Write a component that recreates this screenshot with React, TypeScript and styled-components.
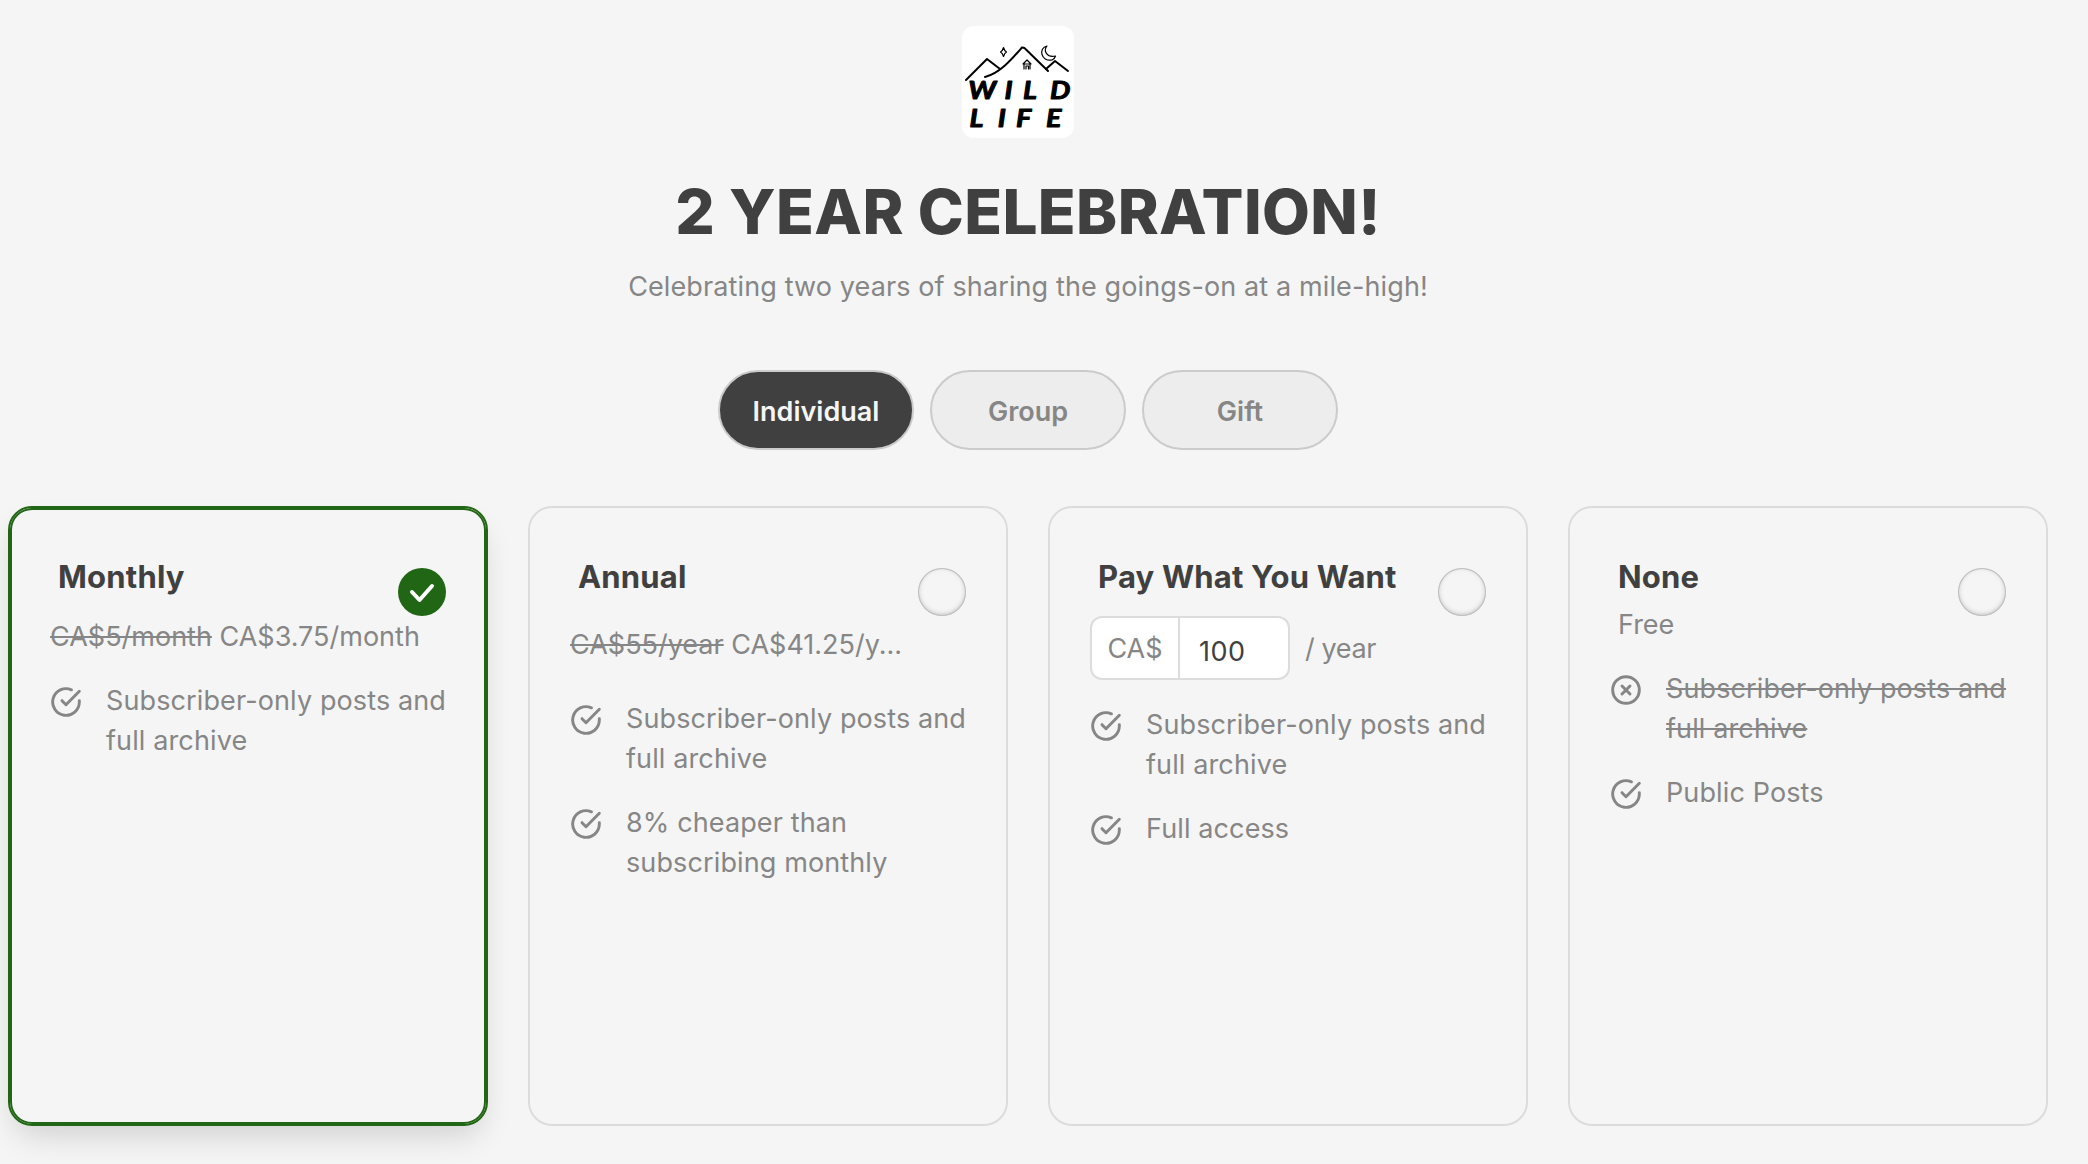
import * as React from 'react'
import styled, { createGlobalStyle, css } from 'styled-components'

const colorText = '#404040'
const colorMuted = '#868686'
const colorBorder = '#dcdcdc'
const colorAccent = '#216614'

const GlobalStyle = createGlobalStyle`
    * {
        box-sizing: border-box;
    }

    body {
        margin: 0;
        background: #f5f5f5;
        font-family: 'Inter', 'Liberation Sans', sans-serif;
        color: ${colorMuted};
        overflow: hidden;
    }
`

const Page = styled.main`
    display: flex;
    flex-direction: column;
    align-items: center;
    width: 2088px;
    height: 1164px;
    padding: 26px 40px 0 8px;
    overflow: hidden;
`

const LogoBox = styled.div`
    width: 112px;
    height: 112px;
    margin-right: 20px;
    border-radius: 12px;
    background: #fff;
    overflow: hidden;
`

const Heading = styled.h1`
    margin: 34px 0 0;
    font-size: 62px;
    font-weight: 800;
    line-height: 80px;
    letter-spacing: 0.38px;
    white-space: nowrap;
    color: ${colorText};
`

const Subheading = styled.p`
    margin: 15px 0 0;
    font-size: 27px;
    line-height: 40px;
    letter-spacing: 0.12px;
    white-space: nowrap;
`

const TabBar = styled.div`
    display: flex;
    gap: 16px;
    margin-top: 63px;
`

const Tab = styled.button<{ $active?: boolean }>`
    width: 196px;
    height: 80px;
    padding: 2px 0 0;
    border: 2px solid #cbcbcb;
    border-radius: 40px;
    background: ${(props) => (props.$active ? '#404040' : '#ededed')};
    color: ${(props) => (props.$active ? '#f5f5f5' : colorMuted)};
    font-family: inherit;
    font-size: 27px;
    font-weight: 600;
`

const PlanList = styled.div`
    display: grid;
    grid-template-columns: repeat(4, 480px);
    gap: 40px;
    margin-top: 56px;
`

const PlanCard = styled.section<{ $selected?: boolean }>`
    height: 620px;
    padding: 45px 40px 0;
    border: 2px solid ${colorBorder};
    border-radius: 24px;

    ${(props) =>
        props.$selected &&
        css`
            border-color: ${colorAccent};
            box-shadow: inset 0 0 0 2px ${colorAccent},
                0 16px 32px -8px rgba(0, 0, 0, 0.16);
        `}
`

const PlanHeader = styled.div`
    display: flex;
    justify-content: space-between;
    height: 63px;
    padding-left: 8px;
`

const PlanTitle = styled.h2`
    margin: 4px 0 0;
    font-size: 31px;
    font-weight: 700;
    line-height: 40px;
    letter-spacing: 0.2px;
    white-space: nowrap;
    color: ${colorText};
`

const Radio = styled.span<{ $selected?: boolean }>`
    width: 48px;
    height: 48px;
    margin-top: 15px;
    flex-shrink: 0;
    border-radius: 50%;
    background: ${(props) => (props.$selected ? colorAccent : 'transparent')};
    box-shadow: ${(props) =>
        props.$selected
            ? 'none'
            : 'inset 0 0 0 1px #c0c0c0, inset 0 -1px 5px rgba(0, 0, 0, 0.26)'};
`

const PriceArea = styled.div<{ $height: number }>`
    display: flow-root;
    height: ${(props) => props.$height}px;
`

const Price = styled.div<{ $offset: number; $indent?: number }>`
    width: 332px;
    margin-top: ${(props) => props.$offset}px;
    padding-left: ${(props) => props.$indent ?? 0}px;
    font-size: 27px;
    line-height: 40px;
    white-space: nowrap;
`

const Struck = styled.span`
    text-decoration: line-through;
    text-decoration-thickness: 2px;
`

const AmountRow = styled.div`
    display: flex;
    align-items: center;
    font-size: 27px;
    line-height: 40px;
`

const AmountBox = styled.div`
    display: flex;
    width: 200px;
    height: 64px;
    margin-right: 15px;
    border: 2px solid ${colorBorder};
    border-radius: 12px;
    background: #fff;
    overflow: hidden;
`

const Currency = styled.span`
    display: flex;
    align-items: center;
    justify-content: center;
    width: 88px;
    padding-top: 1px;
    border-right: 2px solid ${colorBorder};
`

const Period = styled.span`
    padding-top: 1px;
    letter-spacing: -0.4px;
`

const AmountInput = styled.input`
    width: 108px;
    padding: 6px 0 0 19px;
    border: 0;
    background: transparent;
    font-family: inherit;
    font-size: 27px;
    letter-spacing: 0.5px;
    color: ${colorText};
    outline: none;
`

const FeatureList = styled.ul`
    display: flex;
    flex-direction: column;
    gap: 24px;
    margin: 0;
    padding: 0;
    list-style: none;
`

const Feature = styled.li`
    display: flex;
    gap: 24px;
    font-size: 27px;
    line-height: 40px;
    letter-spacing: 0.12px;
    white-space: nowrap;

    svg {
        flex-shrink: 0;
        margin-top: 5px;
    }
`

const WildLifeLogo = () => (
    <svg width="112" height="112" viewBox="0 0 112 112">
        <g
            fill="none"
            stroke="#000"
            strokeWidth="2"
            strokeLinecap="round"
            strokeLinejoin="round"
        >
            <path d="M4 54 25 33 38 43" />
            <path d="M23 51C38 47 49 34 60 21.500Q62 21 64 23.500L86 45" />
            <path d="M84 43 93 35 106 45" />
            <g strokeWidth="1.2">
                <path d="M41.500 21.500Q42.500 25 44.500 26 42.500 27 41.500 30.500 40.500 27 38.500 26 40.500 25 41.500 21.500Z" />
                <path d="M85 20C76 22 79 36 90 34 92 33 93 32 93.500 30 85 32 81 25 85 20Z" />
                <path d="M61 38 65 34 69 38ZM62 38V43M68 38V43M64 43V40H66.500V43" />
            </g>
        </g>
        <g
            transform="scale(1.15 1)"
            fontFamily="'Lato', sans-serif"
            fontSize="25"
            fontWeight="700"
            fontStyle="italic"
            fill="#000"
            stroke="#000"
            strokeWidth="1"
            strokeLinejoin="round"
        >
            <text x="5.500" y="73">W</text>
            <text x="37" y="73">I</text>
            <text x="53" y="73">L</text>
            <text x="76.500" y="73">D</text>
            <text x="6.500" y="101">L</text>
            <text x="31" y="101">I</text>
            <text x="47" y="101">F</text>
            <text x="73" y="101">E</text>
        </g>
    </svg>
)

const CheckIcon = () => (
    <svg
        width="32"
        height="32"
        viewBox="0 0 24 24"
        fill="none"
        stroke="currentColor"
        strokeWidth="2.200"
        strokeLinecap="round"
        strokeLinejoin="round"
    >
        <path d="M22 11.080V12a10 10 0 1 1-5.930-9.140" />
        <path d="M22 4 12 14.010l-3-3" />
    </svg>
)

const CrossIcon = () => (
    <svg
        width="32"
        height="32"
        viewBox="0 0 24 24"
        fill="none"
        stroke="currentColor"
        strokeWidth="2.200"
        strokeLinecap="round"
        strokeLinejoin="round"
    >
        <circle cx="12" cy="12" r="10" />
        <path d="m15 9-6 6M9 9l6 6" />
    </svg>
)

const SelectedMark = () => (
    <svg
        width="48"
        height="48"
        viewBox="0 0 48 48"
        fill="none"
        stroke="#fff"
        strokeWidth="4"
        strokeLinecap="round"
        strokeLinejoin="round"
    >
        <path d="M14 24 21.500 32 34 18" />
    </svg>
)

interface PlanFeature {
    lines: string[]
    excluded?: boolean
}

interface PlanProps {
    title: string
    selected?: boolean
    priceHeight: number
    features: PlanFeature[]
    children: React.ReactNode
}

const Plan = ({
    title,
    selected,
    priceHeight,
    features,
    children,
}: PlanProps) => (
    <PlanCard $selected={selected}>
        <PlanHeader>
            <PlanTitle>{title}</PlanTitle>
            <Radio $selected={selected}>{selected && <SelectedMark />}</Radio>
        </PlanHeader>
        <PriceArea $height={priceHeight}>{children}</PriceArea>
        <FeatureList>
            {features.map(({ lines, excluded }) => {
                const Text = excluded ? Struck : 'span'
                return (
                    <Feature key={lines[0]}>
                        {excluded ? <CrossIcon /> : <CheckIcon />}
                        <Text>
                            {lines.map((line, i) => (
                                <React.Fragment key={line}>
                                    {i > 0 && <br />}
                                    {line}
                                </React.Fragment>
                            ))}
                        </Text>
                    </Feature>
                )
            })}
        </FeatureList>
    </PlanCard>
)

const archive = ['Subscriber-only posts and', 'full archive']

const App = () => (
    <Page>
        <GlobalStyle />
        <LogoBox>
            <WildLifeLogo />
        </LogoBox>
        <Heading>2 YEAR CELEBRATION!</Heading>
        <Subheading>
            Celebrating two years of sharing the goings-on at a mile-high!
        </Subheading>
        <TabBar>
            <Tab $active>Individual</Tab>
            <Tab>Group</Tab>
            <Tab>Gift</Tab>
        </TabBar>
        <PlanList>
            <Plan
                title="Monthly"
                selected
                priceHeight={65}
                features={[{ lines: archive }]}
            >
                <Price $offset={1}>
                    <Struck>CA$5/month</Struck> CA$3.75/month
                </Price>
            </Plan>
            <Plan
                title="Annual"
                priceHeight={83}
                features={[
                    { lines: archive },
                    { lines: ['8% cheaper than', 'subscribing monthly'] },
                ]}
            >
                <Price $offset={9}>
                    <Struck>CA$55/year</Struck> CA$41.25/y...
                </Price>
            </Plan>
            <Plan
                title="Pay What You Want"
                priceHeight={89}
                features={[{ lines: archive }, { lines: ['Full access'] }]}
            >
                <AmountRow>
                    <AmountBox>
                        <Currency>CA$</Currency>
                        <AmountInput defaultValue="100" />
                    </AmountBox>
                    <Period>/ year</Period>
                </AmountRow>
            </Plan>
            <Plan
                title="None"
                priceHeight={53}
                features={[
                    { lines: archive, excluded: true },
                    { lines: ['Public Posts'] },
                ]}
            >
                <Price $offset={-11} $indent={8}>
                    Free
                </Price>
            </Plan>
        </PlanList>
    </Page>
)

export default App
